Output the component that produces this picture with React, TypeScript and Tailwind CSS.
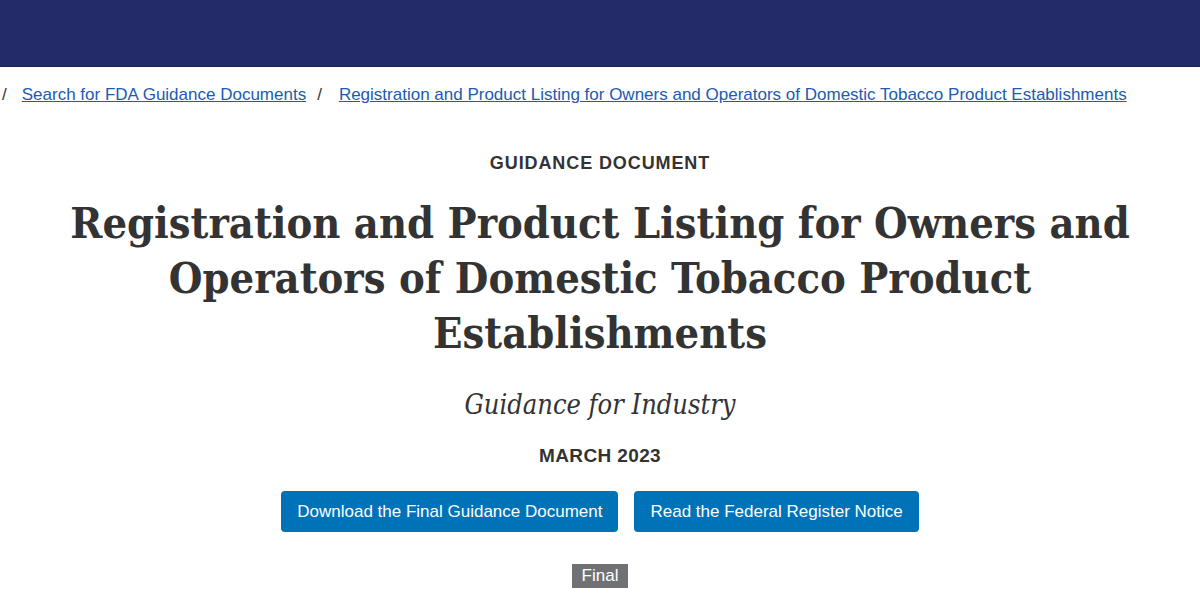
export default function App() {
  return (
    <div className="min-h-screen bg-white font-['Liberation_Sans',Arial,sans-serif] text-[#333]">
      <header className="h-[67px] bg-[#232c68] border-b border-[#1a2150]" />

      <nav className="flex items-center px-[2px] pt-[18px] text-[17px] leading-5">
        <span className="text-[#333]">/</span>
        <a href="#" className="ml-[15px] text-[#1a5bb4] underline">Search for FDA Guidance Documents</a>
        <span className="ml-[11px] text-[#333]">/</span>
        <a href="#" className="ml-[17px] text-[#1a5bb4] underline">
          Registration and Product Listing for Owners and Operators of Domestic Tobacco Product Establishments
        </a>
      </nav>

      <main className="flex flex-col items-center text-center">
        <div className="mt-[45px] text-[18px] font-bold tracking-[0.05em] uppercase text-[#333]">
          Guidance Document
        </div>
        <h1 className="mt-[19px] max-w-[1100px] font-['DejaVu_Serif_Condensed','DejaVu_Serif',serif] [font-stretch:condensed] text-[43px] font-bold leading-[55px] text-[#333]">
          Registration and Product Listing for Owners and Operators of Domestic Tobacco Product Establishments
        </h1>
        <p className="mt-[24px] font-['DejaVu_Serif_Condensed','DejaVu_Serif',serif] [font-stretch:condensed] italic text-[27px] text-[#333]">
          Guidance for Industry
        </p>
        <div className="mt-[16px] text-[19px] font-bold tracking-[0.02em] uppercase">March 2023</div>
        <div className="mt-[21px] flex gap-4">
          <a href="#" className="rounded bg-[#0073b8] px-4 h-[41px] flex items-center text-white text-[17px]">
            Download the Final Guidance Document
          </a>
          <a href="#" className="rounded bg-[#0073b8] px-4 h-[41px] flex items-center text-white text-[17px]">
            Read the Federal Register Notice
          </a>
        </div>
        <span className="mt-[32px] bg-[#6f7175] px-[10px] py-[2px] text-white text-[17px] leading-5">Final</span>
      </main>
    </div>
  );
}
